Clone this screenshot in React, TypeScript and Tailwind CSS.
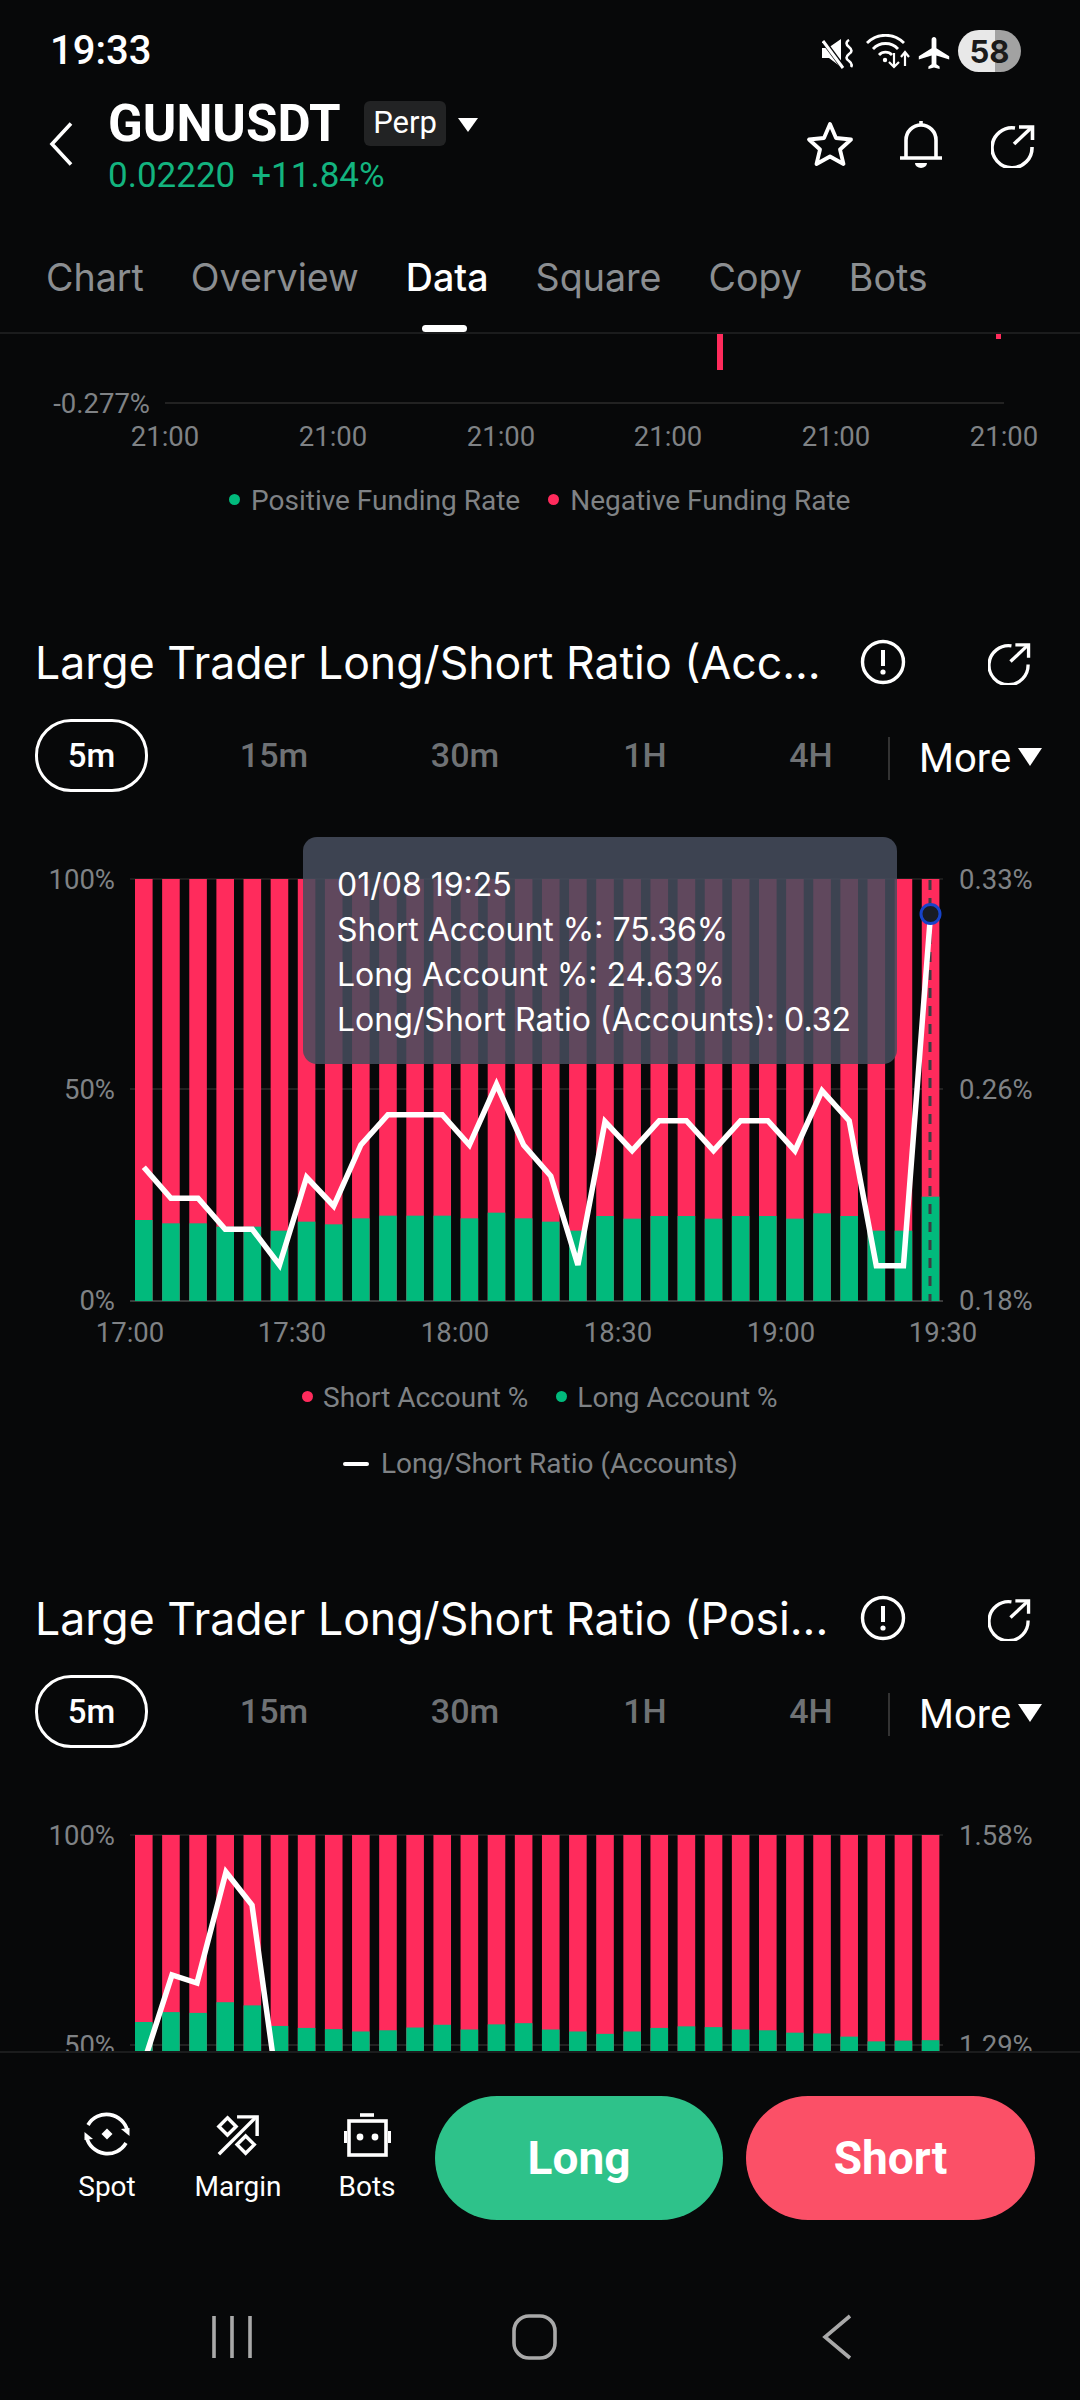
import React from "react";

const RED = "#ff2b5c";
const GREEN = "#01ba7c";
const LABEL = "#7f8285";

const greens1 = [1140,1150,1150,1160,1160,1172,1145,1153,1135,1127,1127,1127,1135,1118,1135,1145,1172,1128,1136,1128,1128,1136,1128,1128,1136,1120,1128,1172,1172,1070];
const line1 = [982,1075,1075,1168,1168,1275,1012,1098,915,824,824,824,915,733,915,1008,1275,845,932,842,842,932,842,842,932,752,842,1277,1277,222];
const greens2 = [612,587,589,562,570,622,627,630,636,633,626,619,631,618,615,631,636,642,636,627,623,625,631,633,639,641,649,661,659,658];

const TOP = 29;
const BOTTOM = 451;
const barX = (i: number) => 135 + 27.13 * i;

function AxisText({ x, y, anchor, children }: { x: number; y: number; anchor: "start" | "middle" | "end"; children: React.ReactNode }) {
  return (
    <text x={x} y={y} textAnchor={anchor} dominantBaseline="central" fontSize={27.5} fill={LABEL} fontFamily="Roboto, sans-serif">
      {children}
    </text>
  );
}

function RatioChart({
  tops,
  line,
  right,
  showDot,
}: {
  tops: number[];
  line: string;
  right: string[];
  showDot?: boolean;
}) {
  const times = [
    ["17:00", 130],
    ["17:30", 292],
    ["18:00", 455],
    ["18:30", 618],
    ["19:00", 781],
    ["19:30", 943],
  ] as const;
  return (
    <svg width={1080} height={500} viewBox="0 0 1080 500" className="block">
      <line x1={130} x2={943} y1={TOP} y2={TOP} stroke="#1c1c1c" strokeWidth={2} />
      <line x1={130} x2={943} y1={239} y2={239} stroke="#222" strokeWidth={2} />
      <line x1={130} x2={943} y1={BOTTOM} y2={BOTTOM} stroke="#3a3a3a" strokeWidth={2} />
      {tops.map((t, i) => (
        <g key={i}>
          <rect x={barX(i)} y={TOP} width={17.6} height={BOTTOM - TOP} fill={RED} />
          <rect x={barX(i)} y={t} width={17.6} height={BOTTOM - t} fill={GREEN} />
        </g>
      ))}
      {showDot && <line x1={930} x2={930} y1={30} y2={BOTTOM} stroke="#3d3d42" strokeWidth={3} strokeDasharray="10 8" />}
      <polyline points={line} fill="none" stroke="#fff" strokeWidth={5.5} strokeLinejoin="miter" />
      {showDot && <circle cx={930.5} cy={64} r={9.5} fill="#181c24" stroke="#1743c9" strokeWidth={3} />}
      <AxisText x={115} y={TOP} anchor="end">100%</AxisText>
      <AxisText x={115} y={239} anchor="end">50%</AxisText>
      <AxisText x={115} y={BOTTOM - 1} anchor="end">0%</AxisText>
      <AxisText x={959} y={TOP} anchor="start">{right[0]}</AxisText>
      <AxisText x={959} y={239} anchor="start">{right[1]}</AxisText>
      <AxisText x={959} y={BOTTOM - 1} anchor="start">{right[2]}</AxisText>
      {times.map(([t, x]) => (
        <AxisText key={t} x={x} y={482} anchor="middle">{t}</AxisText>
      ))}
    </svg>
  );
}

const ShareIcon = ({ size = 44, w = 3.6 }: { size?: number; w?: number }) => (
  <svg width={size} height={size} viewBox="0 0 44 44" fill="none" stroke="#fff" strokeWidth={w}>
    <path d="M24 4 A20 20 0 1 0 41 23" />
    <path d="M23 20 L40 4" />
    <path d="M28 3 H41.5 V16" />
  </svg>
);

const Info = () => (
  <svg width={46} height={46} viewBox="0 0 46 46" fill="none" stroke="#fff" strokeWidth={3.4}>
    <circle cx={23} cy={23} r={20.5} />
    <path d="M23 11 V27" strokeWidth={4} />
    <circle cx={23} cy={33} r={2.6} fill="#fff" stroke="none" />
  </svg>
);

function SectionHead({ title }: { title: string }) {
  return (
    <>
      <div className="relative flex h-[60px] items-center pl-[35px]">
        <span className="text-[44.6px] leading-[60px] text-white whitespace-nowrap [font-family:Inter,sans-serif]">{title}</span>
        <div className="absolute left-[860px] top-[6px]"><Info /></div>
        <div className="absolute left-[988px] top-[9px]"><ShareIcon size={43} w={3.4} /></div>
      </div>
      <div className="relative mt-[26px] h-[73px]">
        <div className="absolute left-[35px] top-0 flex h-[73px] w-[113px] items-center justify-center rounded-[36px] border-[3px] border-white text-[33px] font-medium text-white [font-family:Roboto,sans-serif]">5m</div>
        {[["15m", 274], ["30m", 465], ["1H", 645], ["4H", 811]].map(([t, x]) => (
          <span key={t as string} style={{ left: (x as number) - 60 }} className="absolute top-0 flex h-[73px] w-[120px] items-center justify-center text-[34px] font-medium text-[#6f7275] [font-family:Roboto,sans-serif]">{t}</span>
        ))}
        <div className="absolute left-[888px] top-[18px] h-[43px] w-[2px] bg-[#333]" />
        <span className="absolute left-[919px] top-[3px] flex h-[73px] items-center text-[40px] text-white [font-family:Roboto,sans-serif]">More</span>
        <div className="absolute left-[1018px] top-[29px] h-0 w-0 border-x-[12px] border-t-[18px] border-x-transparent border-t-white" />
      </div>
    </>
  );
}

function Dot({ color }: { color: string }) {
  return <span className="mb-[3px] inline-block h-[11px] w-[11px] rounded-full" style={{ backgroundColor: color }} />;
}

const pts1 = line1
  .map((z, i) => `${143.8 + 27.13 * i},${(840 + z / 3 - 850).toFixed(1)}`)
  .join(" ");
const pts2 = "144,256 172,169 197,177 226,66 252,99 279,294";
const tops2 = greens2.map((z) => 1780 + z / 2.529 - 1806);
const tops1 = greens1.map((z) => 840 + z / 3 - 850);

export default function App() {
  return (
    <div className="flex h-[2400px] w-[1080px] flex-col overflow-hidden bg-[#070809] text-white">
      {/* status bar */}
      <div className="relative h-[100px] shrink-0">
        <span className="absolute left-[50px] top-[27px] text-[40px] font-medium leading-[48px] [font-family:Roboto,sans-serif]">19:33</span>
        <div className="absolute left-[822px] top-[30px] flex items-center">
          <svg width={32} height={30} viewBox="0 0 32 30" className="mt-[6px]" fill="#fff">
            <path d="M0 9 H6 L19 0 V28 L7 19 H0 Z" />
            <path d="M0 0 L20 27" stroke="#070809" strokeWidth={5} />
            <path d="M1 2 L21 29" stroke="#fff" strokeWidth={3} />
            <path d="M27 1 q-5 3 0 7 q5 4 0 7 q-5 4 0 7 q4 3 2 6" fill="none" stroke="#fff" strokeWidth={2.6} />
          </svg>
          <svg width={46} height={36} viewBox="0 0 46 36" className="ml-[12px] mt-[2px]" fill="none" stroke="#fff" strokeWidth={2.8}>
            <path d="M1 9 A26 26 0 0 1 38 9" />
            <path d="M7 15 A17 17 0 0 1 32 15" />
            <path d="M13 21 A9 9 0 0 1 26 21" />
            <circle cx={19} cy={26} r={2.2} fill="#fff" stroke="none" />
            <path d="M28 19 V33 M23 28 L28 33 L33 28" strokeWidth={2.2} />
            <path d="M39 32 V19 M35 23 L39 18 L43 23" strokeWidth={2.2} />
          </svg>
          <svg width={32} height={32} viewBox="2 2 19 20" className="ml-[6px] mt-[4px]" fill="#fff">
            <path d="M21 16v-2l-8-5V3.5c0-.83-.67-1.5-1.5-1.5S10 2.67 10 3.5V9l-8 5v2l8-2.5V19l-2 1.5V22l3.5-1 3.5 1v-1.5L13 19v-5.5l8 2.5z" />
          </svg>
          <div className="ml-[8px] flex h-[42px] w-[63px] items-center justify-center rounded-[21px] bg-[linear-gradient(90deg,#e8e8e8_58%,#a2a2a2_58%)] text-[31px] font-bold leading-none text-[#1a1a1a] [font-family:Inter,sans-serif]">58</div>
        </div>
      </div>

      {/* header */}
      <div className="relative h-[110px] shrink-0">
        <svg width={24} height={44} viewBox="0 0 24 44" className="absolute left-[49px] top-[22px]" fill="none" stroke="#fff" strokeWidth={3.6}>
          <path d="M22 1.5 L3 22 L22 42.5" />
        </svg>
        <span className="absolute left-[108px] top-[-2px] text-[51px] font-bold leading-[52px] [font-family:Roboto,sans-serif]">GUNUSDT</span>
        <div className="absolute left-[364px] top-[1px] flex h-[45px] w-[82px] items-center justify-center rounded-[6px] bg-[#222324] text-[31px] [font-family:Roboto,sans-serif]">Perp</div>
        <div className="absolute left-[458px] top-[18px] h-0 w-0 border-x-[10px] border-t-[14px] border-x-transparent border-t-white" />
        <div className="absolute left-[108px] top-[57px] flex gap-[16px] text-[35px] leading-[38px] text-[#13b47f] [font-family:Roboto,sans-serif]">
          <span>0.02220</span>
          <span>+11.84%</span>
        </div>
        <svg width={48} height={46} viewBox="0 0 48 46" className="absolute left-[806px] top-[21px]" fill="none" stroke="#fff" strokeWidth={3.8} strokeLinejoin="round">
          <path d="M24 3 L30 17 L45 18.5 L34 28.5 L37.5 43 L24 35.5 L10.5 43 L14 28.5 L3 18.5 L18 17 Z" />
        </svg>
        <svg width={44} height={48} viewBox="0 0 44 48" className="absolute left-[899px] top-[20px]" fill="none" stroke="#fff" strokeWidth={3.6}>
          <path d="M7 38 V20 A15 15 0 0 1 37 20 V38" />
          <path d="M1 38 H43" />
          <path d="M22 1 V5" />
          <path d="M16 43 H28 A6 5 0 0 1 16 43 Z" fill="#fff" stroke="none" />
        </svg>
        <div className="absolute left-[991px] top-[24px]"><ShareIcon size={44} w={3.6} /></div>
      </div>

      {/* tabs */}
      <div className="relative flex h-[124px] shrink-0 gap-[47px] border-b-2 border-[#1b1c1d] pl-[46px] pt-[46px] text-[37.6px] leading-[44px] text-[#8b8e91] [font-family:Inter,sans-serif]">
        <span>Chart</span>
        <span>Overview</span>
        <span className="relative font-medium text-white">
          Data
          <span className="absolute left-[16px] top-[69px] h-[7px] w-[45px] rounded-full bg-white" />
        </span>
        <span>Square</span>
        <span>Copy</span>
        <span>Bots</span>
      </div>

      {/* scroll area */}
      <div className="min-h-0 flex-1 overflow-hidden">
        <svg width={1080} height={126} viewBox="0 0 1080 126" className="block">
          <rect x={717} y={0} width={6} height={36} fill={RED} />
          <rect x={996} y={0} width={5} height={5} fill={RED} />
          <line x1={165} x2={1004} y1={69} y2={69} stroke="#222" strokeWidth={2} />
          <AxisText x={150} y={69} anchor="end">-0.277%</AxisText>
          {[165, 333, 501, 668, 836, 1004].map((x) => (
            <AxisText key={x} x={x} y={102} anchor="middle">21:00</AxisText>
          ))}
        </svg>

        <div className="mt-[21px] flex h-[40px] items-center pl-[229px] text-[28px] text-[#7f8285] [font-family:Roboto,sans-serif]">
          <Dot color={GREEN} />
          <span className="ml-[11px]">Positive Funding Rate</span>
          <span className="ml-[28px] flex items-center"><Dot color={RED} /></span>
          <span className="ml-[11px]">Negative Funding Rate</span>
        </div>

        <div className="mt-[112px]"><SectionHead title="Large Trader Long/Short Ratio (Acc..." /></div>

        <div className="relative mt-[58px]">
          <RatioChart tops={tops1} line={pts1} right={["0.33%", "0.26%", "0.18%"]} showDot />
          <div className="absolute left-[303px] top-[-13px] flex h-[227px] w-[594px] flex-col justify-center rounded-[14px] bg-[rgba(70,77,93,0.86)] pl-[34px] pt-[2px] text-[32px] leading-[45px] text-white [font-family:Inter,sans-serif]">
            <span>01/08 19:25</span>
            <span>Short Account %: 75.36%</span>
            <span>Long Account %: 24.63%</span>
            <span>Long/Short Ratio (Accounts): 0.32</span>
          </div>
        </div>

        <div className="mt-[28px] flex h-[40px] items-center pl-[302px] text-[28px] text-[#7f8285] [font-family:Roboto,sans-serif]">
          <Dot color={RED} />
          <span className="ml-[10px]">Short Account %</span>
          <span className="ml-[28px] flex items-center"><Dot color={GREEN} /></span>
          <span className="ml-[10px]">Long Account %</span>
        </div>
        <div className="mt-[26px] flex h-[40px] items-center pl-[343px] text-[28px] text-[#7f8285] [font-family:Roboto,sans-serif]">
          <span className="h-[4px] w-[26px] rounded-full bg-white" />
          <span className="ml-[12px]">Long/Short Ratio (Accounts)</span>
        </div>

        <div className="mt-[105px]"><SectionHead title="Large Trader Long/Short Ratio (Posi..." /></div>
        <div className="mt-[58px]">
          <RatioChart tops={tops2} line={pts2} right={["1.58%", "1.29%", "1.00%"]} />
        </div>
      </div>

      {/* action bar */}
      <div className="relative h-[349px] shrink-0 border-t-2 border-[#1b1c1d]">
        <div className="absolute left-[55px] top-[57px] flex w-[104px] flex-col items-center">
          <svg width={48} height={48} viewBox="0 0 48 48" fill="none" stroke="#fff" strokeWidth={3.6}>
            <path d="M5 15 A21.5 21.5 0 0 1 44.5 21" />
            <path d="M43 33 A21.5 21.5 0 0 1 3.5 27" />
            <path d="M38 19 L46.5 26 L46.5 18 Z" fill="#fff" stroke="none" />
            <path d="M10 29 L1.5 22 L1.5 30 Z" fill="#fff" stroke="none" />
            <path d="M24 18.5 L29.5 24 L24 29.5 L18.5 24 Z" fill="#fff" stroke="none" />
          </svg>
          <span className="mt-[11px] text-[28px] leading-[36px] [font-family:Roboto,sans-serif]">Spot</span>
        </div>
        <div className="absolute left-[186px] top-[61px] flex w-[104px] flex-col items-center">
          <svg width={46} height={44} viewBox="0 0 46 46" fill="none" stroke="#fff" strokeWidth={3.6}>
            <path d="M3 42 L42 3" />
            <path d="M22 3 H43 V23" />
            <path d="M12 4 L21 13 L12 22 L3 13 Z" />
            <path d="M31 23 L40 32 L31 41 L22 32 Z" />
          </svg>
          <span className="mt-[11px] text-[28px] leading-[36px] [font-family:Roboto,sans-serif]">Margin</span>
        </div>
        <div className="absolute left-[315px] top-[59px] flex w-[104px] flex-col items-center">
          <svg width={50} height={46} viewBox="0 0 50 46" fill="none" stroke="#fff" strokeWidth={3.6}>
            <rect x={7} y={9} width={37} height={34} />
            <path d="M18 3 H32" />
            <path d="M3.5 19 V31 M47.5 19 V31" strokeWidth={3} />
            <circle cx={18} cy={25} r={3.4} fill="#fff" stroke="none" />
            <circle cx={33} cy={25} r={3.4} fill="#fff" stroke="none" />
          </svg>
          <span className="mt-[11px] text-[28px] leading-[36px] [font-family:Roboto,sans-serif]">Bots</span>
        </div>
        <div className="absolute left-[435px] top-[43px] flex gap-[23px]">
          <div className="flex h-[124px] w-[288px] items-center justify-center rounded-[62px] bg-[#2ec28a] text-[46px] font-bold [font-family:Roboto,sans-serif]">Long</div>
          <div className="flex h-[124px] w-[289px] items-center justify-center rounded-[62px] bg-[#fb5067] text-[46px] font-bold [font-family:Roboto,sans-serif]">Short</div>
        </div>
        <svg width={1080} height={70} viewBox="0 0 1080 70" className="absolute left-0 top-[249px]" fill="none" stroke="#a9a9a9" strokeWidth={3.6}>
          <path d="M214 14 V56 M232 14 V56 M250 14 V56" />
          <rect x={514} y={14} width={41} height={42} rx={15} />
          <path d="M850 14 L825 35 L850 56" />
        </svg>
      </div>
    </div>
  );
}
